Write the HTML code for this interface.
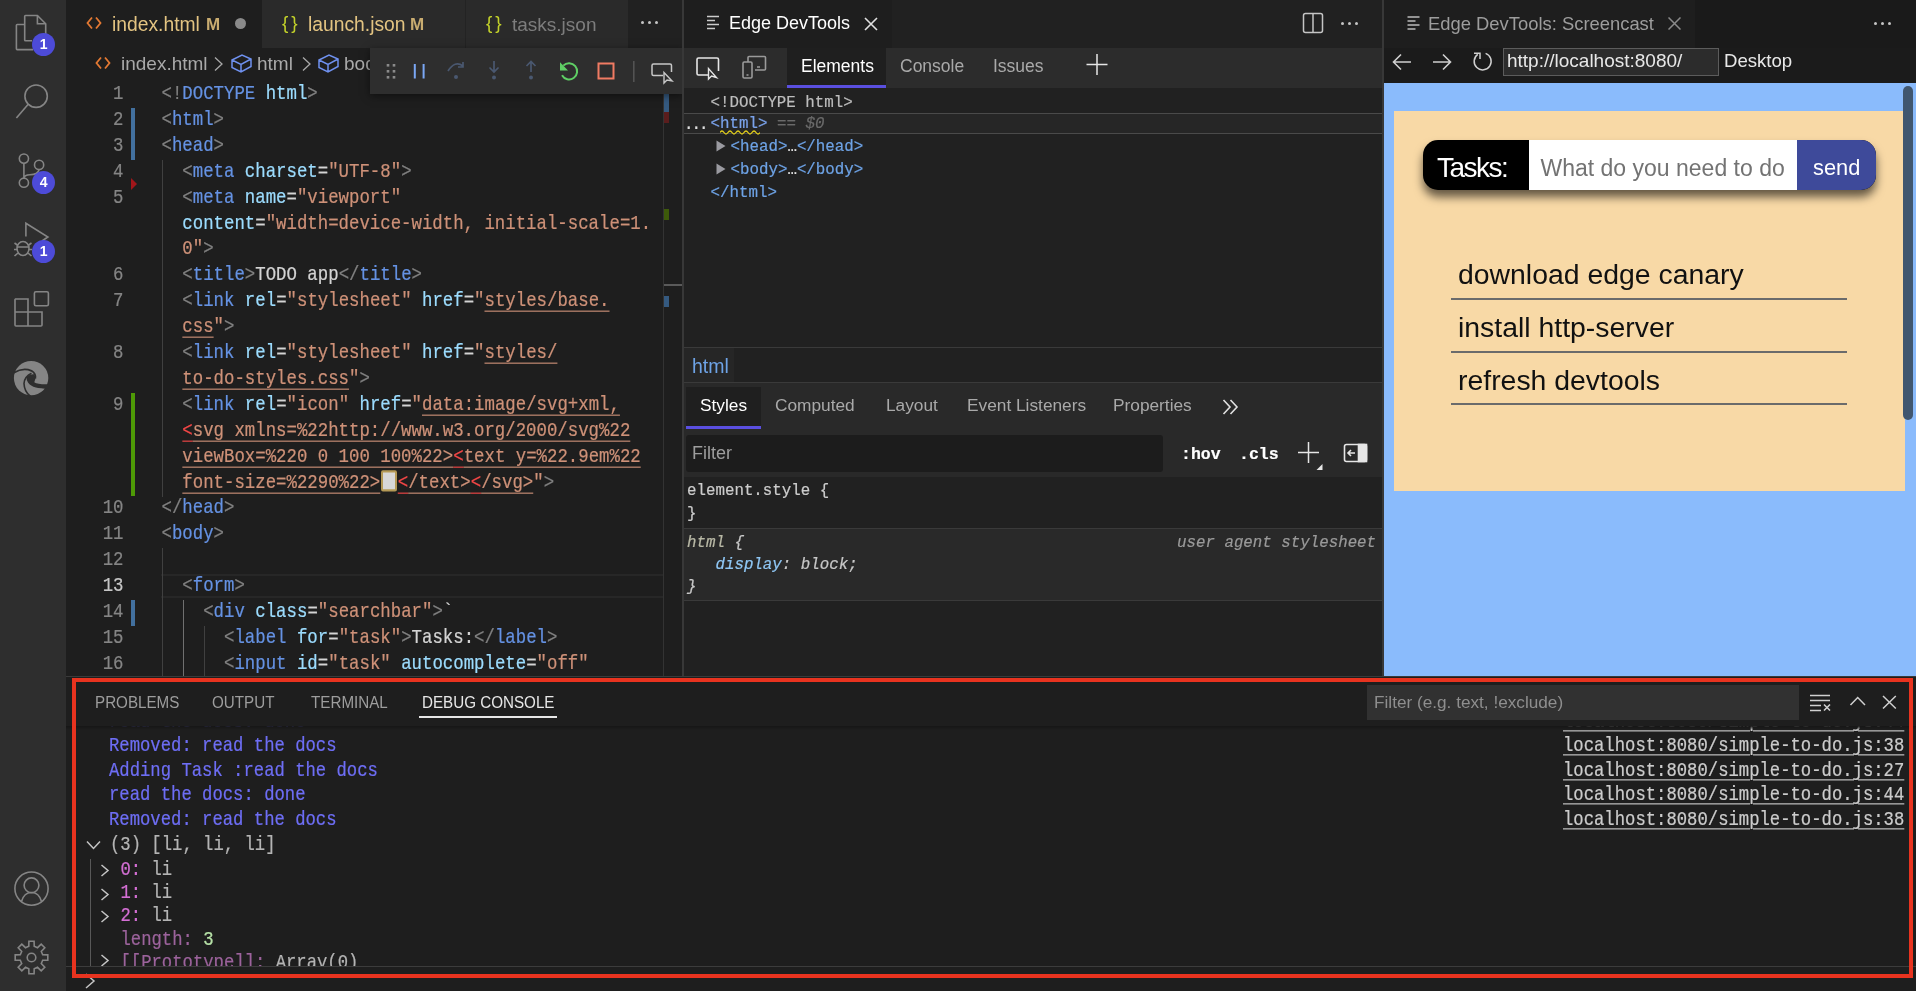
<!DOCTYPE html>
<html><head><meta charset="utf-8">
<style>
*{box-sizing:border-box;margin:0;padding:0}
html,body{width:1916px;height:991px;overflow:hidden;background:#1e1e1e;font-family:"Liberation Sans",sans-serif;position:relative}
.a{position:absolute}
.t{white-space:pre;position:absolute;line-height:1.2}
.badge{position:absolute;width:23px;height:23px;border-radius:50%;background:#4d4bd8;color:#fff;font-size:14px;font-weight:bold;text-align:center;line-height:23px}
.row{position:absolute;left:0;height:25.9px;width:597px;font-family:"Liberation Mono",monospace;font-size:17.36px;line-height:25.9px;white-space:pre;transform:scaleY(1.12);transform-origin:0 16px}
.ln{position:absolute;left:0;width:57.5px;text-align:right;color:#858585}
.cd{position:absolute;left:95.5px;color:#d4d4d4}
.p{color:#808080}.tg{color:#6592e3}.at{color:#9cdcfe}.st{color:#ce9178}.tx{color:#d4d4d4}.er{color:#f44747}
.stu{color:#ce9178;text-decoration:underline;text-decoration-color:#ce9178;text-underline-offset:4px;text-decoration-thickness:1px}
.eru{color:#f44747;text-decoration:underline;text-decoration-color:#f44747;text-underline-offset:4px;text-decoration-thickness:1px}
.emo{display:inline-block;width:16px;height:19px;vertical-align:-3px;background:#d8d8d8;border:2px solid #b59a56;border-radius:2px;margin:0 1px 0 0.5px;position:relative}
.mono{font-family:"Liberation Mono",monospace}
.cl{font-size:17.24px;line-height:24px;transform:scaleY(1.13);transform-origin:0 16.6px}
.lk{color:#cccccc;text-decoration:underline;text-underline-offset:3px;text-decoration-thickness:1px}
.row,.mono{-webkit-text-stroke:0.2px currentColor}
</style></head><body>

<div id="root" style="position:absolute;left:0;top:0;width:1916px;height:991px;will-change:transform;overflow:hidden;background:#1e1e1e">
<div class="a act-bg" style="left:0;top:0;width:66px;height:991px;background:#2e2e2e"></div>
<svg class="a" style="left:0;top:0" width="66" height="991" viewBox="0 0 66 991" fill="none" stroke="#858585" stroke-width="1.6">
 <!-- files -->
 <path d="M24.5,24.5 H17.2 Q16.4,24.5 16.4,25.3 V48.8 Q16.4,49.6 17.2,49.6 H33"/>
 <path d="M25.5,15.5 H37.4 L45.7,23.8 V36 M25.5,15.5 Q24.7,15.5 24.7,16.3 V39.9 Q24.7,40.7 25.5,40.7 H32"/>
 <path d="M37.4,15.5 V23.8 H45.7"/>
 <!-- search -->
 <circle cx="36.1" cy="96.2" r="11.2"/>
 <path d="M28.2,104.3 L16.4,118.1"/>
 <!-- scm -->
 <circle cx="23.9" cy="158.6" r="4.6"/>
 <circle cx="39.1" cy="164.9" r="4.6"/>
 <circle cx="23.9" cy="182.7" r="4.6"/>
 <path d="M23.9,163.2 V178.1 M39.1,169.5 Q38,174.8 30,174.8 Q24.5,174.8 23.9,178"/>
 <!-- run debug -->
 <path d="M25.9,236.5 V223.3 L47.9,237 L42,241"/>
 <ellipse cx="23" cy="248.5" rx="6" ry="7"/>
 <path d="M14.5,243 L18,245.5 M14.5,256 L18,253 M31.5,243 L28,245.5 M31.5,256 L28,253 M14,249.5 H17 M29,249.5 H32 M17,247 H29"/>
 <!-- extensions -->
 <path d="M15.5,299 H28 V312 H42 V325 Q42,326 41,326 H16 Q15,326 15,325 V299.5 Z M15,312 H28 V326"/>
 <rect x="34.4" y="291.8" width="14" height="14" rx="1.5"/>
 <!-- account -->
 <circle cx="31.5" cy="888.6" r="16.6"/>
 <circle cx="31.5" cy="885.3" r="7.4"/>
 <path d="M21.5,901.5 Q24,892.5 31.5,892.5 Q39,892.5 41.5,901.5"/>
 <!-- gear -->
 <path d="M28.9,941.2 L34.1,941.2 L34.2,946.3 L37.5,947.7 L41.2,944.2 L44.8,947.8 L41.3,951.5 L42.7,954.8 L47.8,954.9 L47.8,960.1 L42.7,960.2 L41.3,963.5 L44.8,967.2 L41.2,970.8 L37.5,967.3 L34.2,968.7 L34.1,973.8 L28.9,973.8 L28.8,968.7 L25.5,967.3 L21.8,970.8 L18.2,967.2 L21.7,963.5 L20.3,960.2 L15.2,960.1 L15.2,954.9 L20.3,954.8 L21.7,951.5 L18.2,947.8 L21.8,944.2 L25.5,947.7 L28.8,946.3Z"/>
 <circle cx="31.5" cy="957.5" r="4.3"/>
 <!-- edge logo -->
 <g stroke="none">
  <circle cx="31.1" cy="378.1" r="17.2" fill="#858585"/>
  <path d="M26.6,376.8 Q30,373.8 34,374.3 Q36.2,376.5 35.2,379.5 Q34.2,381.6 34.5,382.5 Q38,384.6 49,384.2 L49,389 Q40,388.5 35.9,387.6 Q30.5,386 28,382.5 Q26.2,379.5 26.6,376.8 Z" fill="#2e2e2e"/>
 </g>
 <path d="M13.8,372.8 Q23,367.2 31.5,370.8 Q36.2,373.5 35.3,378.5" stroke="#2e2e2e" stroke-width="1.8" fill="none"/>
 <path d="M31.5,373.2 Q24.5,376.5 24,383.5 Q24.2,391.5 30.5,396.5" stroke="#2e2e2e" stroke-width="1.6" fill="none"/>
</svg>
<div class="badge" style="left:32.1px;top:32.9px">1</div>
<div class="badge" style="left:32.1px;top:170.8px">4</div>
<div class="badge" style="left:32.1px;top:240px">1</div>

<!-- editor tab bar -->
<div class="a" style="left:66px;top:0;width:616px;height:48px;background:#212121"></div>
<div class="a" style="left:66px;top:0;width:196px;height:48px;background:#1e1e1e"></div>
<div class="a" style="left:262px;top:0;width:203px;height:48px;background:#2a2a2a"></div>
<div class="a" style="left:465px;top:0;width:163px;height:48px;background:#2a2a2a;border-left:1px solid #232323"></div>
<!-- tab contents -->
<svg class="a" style="left:86px;top:16px" width="16" height="14" viewBox="0 0 16 14" fill="none" stroke="#e37933" stroke-width="1.8"><path d="M6,1.5 L1.5,7 L6,12.5 M10,1.5 L14.5,7 L10,12.5"/></svg>
<div class="t" style="left:112px;top:13px;font-size:19.3px;color:#e3c482">index.html</div>
<div class="t" style="left:206px;top:14.5px;font-size:17px;color:#c9ac70;font-weight:bold">M</div>
<div class="a" style="left:235px;top:17.6px;width:11.2px;height:11.2px;border-radius:50%;background:#8a8a8a"></div>
<div class="t" style="left:282px;top:12px;font-size:19px;color:#c2d12a;letter-spacing:3px">{}</div>
<div class="t" style="left:308px;top:13px;font-size:19.3px;color:#e3c482">launch.json</div>
<div class="t" style="left:410px;top:14.5px;font-size:17px;color:#c9ac70;font-weight:bold">M</div>
<div class="t" style="left:486px;top:12px;font-size:19px;color:#c2d12a;letter-spacing:3px">{}</div>
<div class="t" style="left:512px;top:13.5px;font-size:19px;color:#7d7d7d">tasks.json</div>
<div class="a" style="left:641px;top:21px;width:3.4px;height:3.4px;border-radius:50%;background:#c5c5c5"></div>
<div class="a" style="left:648px;top:21px;width:3.4px;height:3.4px;border-radius:50%;background:#c5c5c5"></div>
<div class="a" style="left:655px;top:21px;width:3.4px;height:3.4px;border-radius:50%;background:#c5c5c5"></div>

<!-- breadcrumbs -->
<svg class="a" style="left:95px;top:56px" width="16" height="14" viewBox="0 0 16 14" fill="none" stroke="#e37933" stroke-width="1.8"><path d="M6,1.5 L1.5,7 L6,12.5 M10,1.5 L14.5,7 L10,12.5"/></svg>
<div class="t" style="left:121px;top:53px;font-size:19px;color:#a9a9a9">index.html</div>
<svg class="a" style="left:213px;top:56px" width="11" height="16" viewBox="0 0 11 16" fill="none" stroke="#a9a9a9" stroke-width="1.3"><path d="M2,1.5 L9,8 L2,14.5"/></svg>
<svg class="a" style="left:231px;top:54px" width="21" height="19" viewBox="0 0 21 19" fill="none" stroke="#6f91ef" stroke-width="1.5"><path d="M1,6 L11,1 L20,5 L20,12.5 L10,18 L1,13.5 Z M1,6 L10,10.5 L20,5 M10,10.5 L10,18"/></svg>
<div class="t" style="left:257px;top:53px;font-size:19px;color:#a9a9a9">html</div>
<svg class="a" style="left:301px;top:56px" width="11" height="16" viewBox="0 0 11 16" fill="none" stroke="#a9a9a9" stroke-width="1.3"><path d="M2,1.5 L9,8 L2,14.5"/></svg>
<svg class="a" style="left:318px;top:54px" width="21" height="19" viewBox="0 0 21 19" fill="none" stroke="#6f91ef" stroke-width="1.5"><path d="M1,6 L11,1 L20,5 L20,12.5 L10,18 L1,13.5 Z M1,6 L10,10.5 L20,5 M10,10.5 L10,18"/></svg>
<div class="t" style="left:344px;top:53px;font-size:19px;color:#a9a9a9">body</div>

<!-- code -->
<div class="a" style="left:66px;top:82px;width:597px;height:594px;overflow:hidden">
 <!-- current line -->
 <div class="a" style="left:95px;top:492px;width:502px;height:23.5px;border-top:2px solid #272727;border-bottom:2px solid #272727"></div>
 <!-- indent guides -->
 <div class="a" style="left:95.5px;top:77.7px;width:1px;height:337px;background:#404040"></div>
 <div class="a" style="left:95.5px;top:466px;width:1px;height:128px;background:#404040"></div>
 <div class="a" style="left:116.5px;top:518px;width:1px;height:76px;background:#707070"></div>
 <div class="a" style="left:137.5px;top:544px;width:1px;height:50px;background:#404040"></div>
 <!-- git gutter -->
 <div class="a" style="left:65px;top:25.9px;width:4px;height:51.8px;background:#42709e"></div>
 <div class="a" style="left:65px;top:310.8px;width:4px;height:103.6px;background:#4e9a06"></div>
 <div class="a" style="left:65px;top:518px;width:4px;height:25.9px;background:#42709e"></div>
 <svg class="a" style="left:65px;top:96px" width="6" height="12" viewBox="0 0 6 12"><path d="M0,0 L6,6 L0,12 Z" fill="#a1161a"/></svg>
 <div class="row" style="top:0.0px"><span class="ln">1</span><span class="cd"><span class="p">&lt;!</span><span class="tg">DOCTYPE</span><span class="tx"> </span><span class="at">html</span><span class="p">&gt;</span></span></div>
<div class="row" style="top:25.9px"><span class="ln">2</span><span class="cd"><span class="p">&lt;</span><span class="tg">html</span><span class="p">&gt;</span></span></div>
<div class="row" style="top:51.8px"><span class="ln">3</span><span class="cd"><span class="p">&lt;</span><span class="tg">head</span><span class="p">&gt;</span></span></div>
<div class="row" style="top:77.7px"><span class="ln">4</span><span class="cd"><span class="tx">  </span><span class="p">&lt;</span><span class="tg">meta</span><span class="tx"> </span><span class="at">charset</span><span class="tx">=</span><span class="st">&quot;UTF-8&quot;</span><span class="p">&gt;</span></span></div>
<div class="row" style="top:103.6px"><span class="ln">5</span><span class="cd"><span class="tx">  </span><span class="p">&lt;</span><span class="tg">meta</span><span class="tx"> </span><span class="at">name</span><span class="tx">=</span><span class="st">&quot;viewport&quot;</span></span></div>
<div class="row" style="top:129.5px"><span class="cd"><span class="tx">  </span><span class="at">content</span><span class="tx">=</span><span class="st">&quot;width=device-width, initial-scale=1.</span></span></div>
<div class="row" style="top:155.4px"><span class="cd"><span class="tx">  </span><span class="st">0&quot;</span><span class="p">&gt;</span></span></div>
<div class="row" style="top:181.3px"><span class="ln">6</span><span class="cd"><span class="tx">  </span><span class="p">&lt;</span><span class="tg">title</span><span class="p">&gt;</span><span class="tx">TODO app</span><span class="p">&lt;/</span><span class="tg">title</span><span class="p">&gt;</span></span></div>
<div class="row" style="top:207.2px"><span class="ln">7</span><span class="cd"><span class="tx">  </span><span class="p">&lt;</span><span class="tg">link</span><span class="tx"> </span><span class="at">rel</span><span class="tx">=</span><span class="st">&quot;stylesheet&quot;</span><span class="tx"> </span><span class="at">href</span><span class="tx">=</span><span class="st">&quot;</span><span class="stu">styles/base.</span></span></div>
<div class="row" style="top:233.1px"><span class="cd"><span class="tx">  </span><span class="stu">css</span><span class="st">&quot;</span><span class="p">&gt;</span></span></div>
<div class="row" style="top:259.0px"><span class="ln">8</span><span class="cd"><span class="tx">  </span><span class="p">&lt;</span><span class="tg">link</span><span class="tx"> </span><span class="at">rel</span><span class="tx">=</span><span class="st">&quot;stylesheet&quot;</span><span class="tx"> </span><span class="at">href</span><span class="tx">=</span><span class="st">&quot;</span><span class="stu">styles/</span></span></div>
<div class="row" style="top:284.9px"><span class="cd"><span class="tx">  </span><span class="stu">to-do-styles.css</span><span class="st">&quot;</span><span class="p">&gt;</span></span></div>
<div class="row" style="top:310.8px"><span class="ln">9</span><span class="cd"><span class="tx">  </span><span class="p">&lt;</span><span class="tg">link</span><span class="tx"> </span><span class="at">rel</span><span class="tx">=</span><span class="st">&quot;icon&quot;</span><span class="tx"> </span><span class="at">href</span><span class="tx">=</span><span class="st">&quot;</span><span class="stu">data:image/svg+xml,</span></span></div>
<div class="row" style="top:336.7px"><span class="cd"><span class="tx">  </span><span class="eru">&lt;</span><span class="stu">svg xmlns=%22http://www.w3.org/2000/svg%22</span></span></div>
<div class="row" style="top:362.6px"><span class="cd"><span class="tx">  </span><span class="stu">viewBox=%220 0 100 100%22&gt;</span><span class="eru">&lt;</span><span class="stu">text y=%22.9em%22</span></span></div>
<div class="row" style="top:388.5px"><span class="cd"><span class="tx">  </span><span class="stu">font-size=%2290%22&gt;</span><span class="emo"></span><span class="eru">&lt;</span><span class="stu">/text&gt;</span><span class="eru">&lt;</span><span class="stu">/svg&gt;</span><span class="st">&quot;</span><span class="p">&gt;</span></span></div>
<div class="row" style="top:414.4px"><span class="ln">10</span><span class="cd"><span class="p">&lt;/</span><span class="tg">head</span><span class="p">&gt;</span></span></div>
<div class="row" style="top:440.3px"><span class="ln">11</span><span class="cd"><span class="p">&lt;</span><span class="tg">body</span><span class="p">&gt;</span></span></div>
<div class="row" style="top:466.2px"><span class="ln">12</span><span class="cd"></span></div>
<div class="row cur" style="top:492.1px"><span class="ln" style="color:#c6c6c6">13</span><span class="cd"><span class="tx">  </span><span class="p">&lt;</span><span class="tg">form</span><span class="p">&gt;</span></span></div>
<div class="row" style="top:518.0px"><span class="ln">14</span><span class="cd"><span class="tx">    </span><span class="p">&lt;</span><span class="tg">div</span><span class="tx"> </span><span class="at">class</span><span class="tx">=</span><span class="st">&quot;searchbar&quot;</span><span class="p">&gt;</span><span class="tx">`</span></span></div>
<div class="row" style="top:543.9px"><span class="ln">15</span><span class="cd"><span class="tx">      </span><span class="p">&lt;</span><span class="tg">label</span><span class="tx"> </span><span class="at">for</span><span class="tx">=</span><span class="st">&quot;task&quot;</span><span class="p">&gt;</span><span class="tx">Tasks:</span><span class="p">&lt;/</span><span class="tg">label</span><span class="p">&gt;</span></span></div>
<div class="row" style="top:569.8px"><span class="ln">16</span><span class="cd"><span class="tx">      </span><span class="p">&lt;</span><span class="tg">input</span><span class="tx"> </span><span class="at">id</span><span class="tx">=</span><span class="st">&quot;task&quot;</span><span class="tx"> </span><span class="at">autocomplete</span><span class="tx">=</span><span class="st">&quot;off&quot;</span></span></div>
</div>
<!-- editor overview ruler -->
<div class="a" style="left:663px;top:82px;width:1px;height:594px;background:#333"></div>
<div class="a" style="left:664px;top:94px;width:5px;height:18px;background:#355a80"></div>
<div class="a" style="left:664px;top:112px;width:5px;height:11px;background:#5a1d1d"></div>
<div class="a" style="left:664px;top:209px;width:5px;height:11px;background:#3d5a0a"></div>
<div class="a" style="left:664px;top:296px;width:5px;height:11px;background:#355a80"></div>
<div class="a" style="left:664px;top:284px;width:19px;height:2px;background:#5a5a5a"></div>

<!-- debug toolbar -->
<div class="a" style="left:370px;top:48px;width:313px;height:46px;background:#2e2e2e;box-shadow:0 2px 8px rgba(0,0,0,0.5)"></div>
<svg class="a" style="left:370px;top:48px" width="313" height="46" viewBox="370 48 313 46" fill="none" stroke-width="1.7">
 <g fill="#8a8a8a" stroke="none"><rect x="386.7" y="64" width="2.6" height="2.6"/><rect x="392.7" y="64" width="2.6" height="2.6"/><rect x="386.7" y="70" width="2.6" height="2.6"/><rect x="392.7" y="70" width="2.6" height="2.6"/><rect x="386.7" y="76" width="2.6" height="2.6"/><rect x="392.7" y="76" width="2.6" height="2.6"/></g>
 <path d="M414.8,64 V78.5 M423.6,64 V78.5" stroke="#7aa7f4" stroke-width="2"/>
 <g stroke="#4a5870"><path d="M448,71 Q455,60 463,66 M463,62 V67 H458"/><circle cx="456" cy="77" r="2" fill="#4a5870" stroke="none"/></g>
 <g stroke="#4a5870"><path d="M494,61 V72 M489.5,67.5 L494,72 L498.5,67.5"/><circle cx="494" cy="77.5" r="2" fill="#4a5870" stroke="none"/></g>
 <g stroke="#4a5870"><path d="M531,61.5 V72 M526.5,66 L531,61.5 L535.5,66"/><circle cx="531" cy="77.5" r="2" fill="#4a5870" stroke="none"/></g>
 <path d="M562,75.3 A8.1,8.1 0 1 0 563.3,65.6" stroke="#5fcf65" stroke-width="2"/><path d="M560,62.3 L560,70.6 L568,70.6 Z" fill="#5fcf65" stroke="none"/>
 <rect x="598.5" y="63.5" width="15" height="15" stroke="#f07b63" stroke-width="2"/>
 <path d="M633.8,61 V82" stroke="#555" stroke-width="1.5"/>
 <path d="M663,75.5 H653.5 Q652,75.5 652,74 V65.5 Q652,64 653.5,64 H670 Q671.5,64 671.5,65.5 V72" stroke="#c8c8c8" stroke-width="1.5"/>
 <path d="M664,72.5 L664,83 L667,80 L672,81 Z" stroke="#c8c8c8" stroke-width="1.4"/>
</svg>

<!-- dividers -->
<div class="a" style="left:682px;top:0;width:2px;height:676px;background:#383838"></div>
<div class="a" style="left:1382px;top:0;width:2px;height:676px;background:#383838"></div>
<!-- tab bar -->
<div class="a" style="left:684px;top:0;width:698px;height:48px;background:#212121"></div>
<div class="a" style="left:684px;top:0;width:208px;height:48px;background:#1e1e1e"></div>
<svg class="a" style="left:706px;top:15px" width="15" height="15" viewBox="0 0 15 15" stroke="#cccccc" stroke-width="1.5"><path d="M1,1.5 H13 M1,5.5 H9 M1,9.5 H13 M1,13.5 H9"/></svg>
<div class="t" style="left:729px;top:13.2px;font-size:18px;color:#ffffff">Edge DevTools</div>
<svg class="a" style="left:864px;top:17px" width="14" height="14" viewBox="0 0 14 14" stroke="#e0e0e0" stroke-width="1.6"><path d="M1,1 L13,13 M13,1 L1,13"/></svg>
<svg class="a" style="left:1302px;top:12px" width="22" height="22" viewBox="0 0 22 22" fill="none" stroke="#c5c5c5" stroke-width="1.5"><rect x="1.5" y="1.5" width="19" height="19" rx="2"/><path d="M11,1.5 V20.5"/></svg>
<div class="a" style="left:1341px;top:21.5px;width:3.4px;height:3.4px;border-radius:50%;background:#c5c5c5"></div>
<div class="a" style="left:1348px;top:21.5px;width:3.4px;height:3.4px;border-radius:50%;background:#c5c5c5"></div>
<div class="a" style="left:1355px;top:21.5px;width:3.4px;height:3.4px;border-radius:50%;background:#c5c5c5"></div>

<!-- devtools toolbar -->
<div class="a" style="left:684px;top:48px;width:698px;height:40px;background:#2c2c2c"></div>
<div class="a" style="left:787px;top:48px;width:99px;height:40px;background:#1f1f1f;border-bottom:3px solid #5a4fe0"></div>
<svg class="a" style="left:690px;top:50px" width="90" height="36" viewBox="690 50 90 36" fill="none" stroke="#e6e6e6" stroke-width="1.6">
 <path d="M708,75 H698.5 Q697,75 697,73.5 V59.5 Q697,58 698.5,58 H717 Q718.5,58 718.5,59.5 V71"/>
 <path d="M708.5,68.5 V79 L711.5,76 L716.5,77.5 Z" stroke-width="1.4"/>
 <g stroke="#9a9a9a"><path d="M748,62 V57.5 Q748,56.5 749,56.5 H764.5 Q765.5,56.5 765.5,57.5 V69 Q765.5,70 764.5,70 H755"/><rect x="743" y="62" width="9" height="16" rx="1.2"/><path d="M746.5,75 H748.5 M757,67 H760"/></g>
</svg>
<div class="t" style="left:801px;top:56px;font-size:17.5px;color:#ffffff">Elements</div>
<div class="t" style="left:900px;top:56px;font-size:17.5px;color:#a9a9a9">Console</div>
<div class="t" style="left:993px;top:56px;font-size:17.5px;color:#a9a9a9">Issues</div>
<svg class="a" style="left:1086px;top:54px" width="22" height="22" viewBox="0 0 22 22" stroke="#e6e6e6" stroke-width="1.5"><path d="M11,0 V21 M0.5,10.5 H21.5"/></svg>

<!-- elements tree -->
<div class="a" style="left:684px;top:88px;width:698px;height:260px;background:#212121"></div>
<div class="a" style="left:684px;top:113px;width:698px;height:21px;background:#262626;border-top:1px solid #4a4a4a;border-bottom:1px solid #4a4a4a"></div>
<div class="t mono" style="left:710.5px;top:94px;font-size:15.8px;line-height:19px;color:#bdbdbd">&lt;!DOCTYPE html&gt;</div>
<div class="t mono" style="left:684px;top:116px;font-size:15.8px;line-height:19px;color:#e0e0e0;letter-spacing:-2px">...</div>
<div class="t mono" style="left:710.5px;top:115px;font-size:15.8px;line-height:19px;color:#7aa2ea">&lt;html&gt;</div>
<div class="t mono" style="left:777px;top:115px;font-size:15.8px;line-height:19px;color:#6a6a6a;font-style:italic">== $0</div>
<svg class="a" style="left:720px;top:129px" width="40" height="7" viewBox="0 0 40 7" fill="none" stroke="#e6d21a" stroke-width="1.3"><path d="M0,3.5 Q2,0.5 4,3.5 T8,3.5 T12,3.5 T16,3.5 T20,3.5 T24,3.5 T28,3.5 T32,3.5 T36,3.5 T40,3.5"/></svg>
<svg class="a" style="left:716px;top:140px" width="10" height="12" viewBox="0 0 10 12"><path d="M0.5,0.5 L9.5,6 L0.5,11.5 Z" fill="#9a9aa0"/></svg>
<svg class="a" style="left:716px;top:163px" width="10" height="12" viewBox="0 0 10 12"><path d="M0.5,0.5 L9.5,6 L0.5,11.5 Z" fill="#9a9aa0"/></svg>
<div class="t mono" style="left:730.5px;top:137.5px;font-size:15.8px;line-height:19px;color:#6ea3e6">&lt;head&gt;<span style="color:#e6e6e6">…</span>&lt;/head&gt;</div>
<div class="t mono" style="left:730.5px;top:160.5px;font-size:15.8px;line-height:19px;color:#6ea3e6">&lt;body&gt;<span style="color:#e6e6e6">…</span>&lt;/body&gt;</div>
<div class="t mono" style="left:710.5px;top:183.5px;font-size:15.8px;line-height:19px;color:#6ea3e6">&lt;/html&gt;</div>

<!-- breadcrumb -->
<div class="a" style="left:684px;top:347px;width:698px;height:1px;background:#3a3a3a"></div>
<div class="a" style="left:684px;top:348px;width:698px;height:35px;background:#212121"></div>
<div class="a" style="left:684px;top:348px;width:50px;height:34px;background:#262626"></div>
<div class="t" style="left:692px;top:354.5px;font-size:19.5px;color:#6ea3e6">html</div>
<div class="a" style="left:684px;top:382px;width:698px;height:1px;background:#3a3a3a"></div>

<!-- styles tabs -->
<div class="a" style="left:684px;top:383px;width:698px;height:47px;background:#292929"></div>
<div class="a" style="left:686px;top:387px;width:75px;height:42px;background:#1f1f1f;border-bottom:3px solid #5a4fe0"></div>
<div class="t" style="left:700px;top:395px;font-size:17.3px;color:#ffffff">Styles</div>
<div class="t" style="left:775px;top:395px;font-size:17.3px;color:#a9a9a9">Computed</div>
<div class="t" style="left:886px;top:395px;font-size:17.3px;color:#a9a9a9">Layout</div>
<div class="t" style="left:967px;top:395px;font-size:17.3px;color:#a9a9a9">Event Listeners</div>
<div class="t" style="left:1113px;top:395px;font-size:17.3px;color:#a9a9a9">Properties</div>
<svg class="a" style="left:1222px;top:399px" width="17" height="16" viewBox="0 0 17 16" fill="none" stroke="#e0e0e0" stroke-width="1.6"><path d="M1.5,1 L8,8 L1.5,15 M8.5,1 L15,8 L8.5,15"/></svg>

<!-- filter row -->
<div class="a" style="left:684px;top:430px;width:698px;height:47px;background:#292929"></div>
<div class="a" style="left:686px;top:435px;width:477px;height:37px;background:#1c1c1c;border-radius:3px"></div>
<div class="t" style="left:692px;top:443px;font-size:18px;color:#9d9d9d">Filter</div>
<div class="t mono" style="left:1181px;top:445px;font-size:16.5px;font-weight:bold;color:#ffffff">:hov</div>
<div class="t mono" style="left:1239px;top:445px;font-size:16.5px;font-weight:bold;color:#ffffff">.cls</div>
<svg class="a" style="left:1297px;top:441px" width="30" height="30" viewBox="0 0 30 30" stroke="#e6e6e6" stroke-width="1.5"><path d="M11.5,1 V22 M1,11.5 H22"/><path d="M19.5,29 L25.5,23 V29 Z" fill="#e6e6e6" stroke="none"/></svg>
<svg class="a" style="left:1343px;top:443px" width="26" height="20" viewBox="0 0 26 20" fill="none" stroke="#e6e6e6" stroke-width="1.6"><rect x="1.5" y="1.5" width="22" height="17" rx="2"/><rect x="15.5" y="1.5" width="8" height="17" fill="#e6e6e6"/><path d="M12,10 H5 M8,7 L5,10 L8,13"/></svg>

<!-- rules -->
<div class="a" style="left:684px;top:477px;width:698px;height:51px;background:#212121"></div>
<div class="t mono" style="left:687px;top:479.5px;font-size:15.8px;line-height:23px;color:#cccccc">element.style {<br>}</div>
<div class="a" style="left:684px;top:528px;width:698px;height:1px;background:#3a3a3a"></div>
<div class="a" style="left:684px;top:529px;width:698px;height:71px;background:#292929"></div>
<div class="t mono" style="left:687px;top:531.7px;font-size:15.8px;line-height:22px;color:#c8c8c8;font-style:italic"><span style="color:#b9b9a6">html</span> {<br>   <span style="color:#8fc7f5">display</span>: block;<br>}</div>
<div class="t mono" style="left:1177px;top:534px;font-size:15.8px;color:#9a9a9a;font-style:italic">user agent stylesheet</div>
<div class="a" style="left:684px;top:601px;width:698px;height:75px;background:#212121"></div>
<div class="a" style="left:684px;top:600px;width:698px;height:1px;background:#3a3a3a"></div>

<div class="a" style="left:1384px;top:0;width:532px;height:48px;background:#1a1a1a"></div>
<div class="a" style="left:1384px;top:0;width:311px;height:48px;background:#1e1e1e"></div>
<svg class="a" style="left:1407px;top:16px" width="14" height="14" viewBox="0 0 14 14" stroke="#bbbbbb" stroke-width="1.5"><path d="M0.5,1 H12.5 M0.5,5 H8.5 M0.5,9 H12.5 M0.5,13 H8.5"/></svg>
<div class="t" style="left:1428px;top:12.5px;font-size:18.4px;color:#9d9d9d">Edge DevTools: Screencast</div>
<svg class="a" style="left:1668px;top:17px" width="13" height="13" viewBox="0 0 13 13" stroke="#8a8a8a" stroke-width="1.5"><path d="M0.5,0.5 L12.5,12.5 M12.5,0.5 L0.5,12.5"/></svg>
<div class="a" style="left:1874px;top:21.5px;width:3.4px;height:3.4px;border-radius:50%;background:#c5c5c5"></div>
<div class="a" style="left:1881px;top:21.5px;width:3.4px;height:3.4px;border-radius:50%;background:#c5c5c5"></div>
<div class="a" style="left:1888px;top:21.5px;width:3.4px;height:3.4px;border-radius:50%;background:#c5c5c5"></div>

<div class="a" style="left:1384px;top:48px;width:532px;height:35px;background:#1b1b1b"></div>
<svg class="a" style="left:1390px;top:50px" width="110" height="24" viewBox="1390 50 110 24" fill="none" stroke="#d0d0d0" stroke-width="1.6">
 <path d="M1411,62 H1394 M1401,54.5 L1393.5,62 L1401,69.5"/>
 <path d="M1433,62 H1450.5 M1443,54.5 L1450.5,62 L1443,69.5"/>
 <path d="M1485.6,53.4 A8.5,8.5 0 1 1 1477.8,54.4" stroke-width="1.5"/>
 <path d="M1474,53.2 H1480 V59" stroke-width="1.5"/>
</svg>
<div class="a" style="left:1503px;top:48px;width:216px;height:28px;background:#2c2c2c;border:1px solid #5c5c5c"></div>
<div class="t" style="left:1507px;top:49.5px;font-size:19px;color:#e8e8e8">http://localhost:8080/</div>
<div class="t" style="left:1724px;top:49.5px;font-size:18.6px;color:#e8e8e8">Desktop</div>

<div class="a" style="left:1384px;top:83px;width:532px;height:593px;background:#8abbfc"></div>
<div class="a" style="left:1393.5px;top:111px;width:511px;height:380px;background:#f8d9a6"></div>
<!-- search bar -->
<div class="a" style="left:1422.6px;top:140px;width:453px;height:50px;border-radius:15px;background:#000;box-shadow:0 7px 10px rgba(0,0,0,0.6)"></div>
<div class="a" style="left:1528.8px;top:140.4px;width:268px;height:49.3px;background:#fff"></div>
<div class="a" style="left:1796.8px;top:140px;width:79px;height:50px;background:#3e4a9a;border-radius:0 15px 15px 0"></div>
<div class="t" style="left:1437px;top:151px;font-size:28px;color:#fff;letter-spacing:-1.5px">Tasks:</div>
<div class="t" style="left:1540.5px;top:154.5px;font-size:23px;color:#737373">What do you need to do</div>
<div class="t" style="left:1813px;top:155px;font-size:21.8px;color:#fff">send</div>
<!-- list -->
<div class="t" style="left:1458px;top:257px;font-size:28.4px;color:#111">download edge canary</div>
<div class="a" style="left:1451px;top:297.5px;width:396px;height:2px;background:#6b6b6b"></div>
<div class="t" style="left:1458px;top:310px;font-size:28.4px;color:#111">install http-server</div>
<div class="a" style="left:1451px;top:350.5px;width:396px;height:2px;background:#6b6b6b"></div>
<div class="t" style="left:1458px;top:362.5px;font-size:28.4px;color:#111">refresh devtools</div>
<div class="a" style="left:1451px;top:403px;width:396px;height:2px;background:#6b6b6b"></div>
<!-- scrollbar -->
<div class="a" style="left:1903px;top:86px;width:10px;height:334px;border-radius:5px;background:#40566f"></div>

<div class="a" style="left:66px;top:676px;width:1850px;height:315px;background:#1e1e1e"></div>
<div class="a" style="left:66px;top:676px;width:1850px;height:1px;background:#3a3a3a"></div>
<!-- tabs -->
<div class="t" style="left:95px;top:694px;font-size:15.2px;color:#9d9d9d;transform:scaleY(1.12);transform-origin:0 17px">PROBLEMS</div>
<div class="t" style="left:212px;top:694px;font-size:15.2px;color:#9d9d9d;transform:scaleY(1.12);transform-origin:0 17px">OUTPUT</div>
<div class="t" style="left:311px;top:694px;font-size:15.2px;color:#9d9d9d;transform:scaleY(1.12);transform-origin:0 17px">TERMINAL</div>
<div class="t" style="left:422px;top:694px;font-size:15.2px;color:#e7e7e7;transform:scaleY(1.12);transform-origin:0 17px">DEBUG CONSOLE</div>
<div class="a" style="left:419px;top:715.5px;width:138px;height:2px;background:#e7e7e7"></div>
<!-- filter -->
<div class="a" style="left:1367px;top:685px;width:432px;height:35px;background:#313131"></div>
<div class="t" style="left:1374px;top:692px;font-size:17.2px;color:#8e8e8e">Filter (e.g. text, !exclude)</div>
<svg class="a" style="left:1806px;top:690px" width="95" height="24" viewBox="1806 690 95 24" fill="none" stroke="#d0d0d0" stroke-width="1.5">
 <path d="M1810,695.5 H1830 M1810,700.5 H1830 M1810,705.5 H1821 M1810,710.5 H1821"/>
 <path d="M1824,704.5 L1830,710.5 M1830,704.5 L1824,710.5" stroke-width="1.6"/>
 <path d="M1850.5,705 L1857.7,697.5 L1865,705"/>
 <path d="M1883,696 L1895.8,708.5 M1895.8,696 L1883,708.5"/>
</svg>
<!-- console content -->
<div class="a" style="left:66px;top:725.5px;width:1850px;height:240.5px;overflow:hidden">
<div class="t mono cl" style="left:43px;top:-14.1px"><span style="color:#6e6ef5">read the docs: done</span></div>
<div class="t mono cl" style="left:43px;top:9.9px"><span style="color:#6e6ef5">Removed: read the docs</span></div>
<div class="t mono cl" style="left:43px;top:34.8px"><span style="color:#6e6ef5">Adding Task :read the docs</span></div>
<div class="t mono cl" style="left:43px;top:58.8px"><span style="color:#6e6ef5">read the docs: done</span></div>
<div class="t mono cl" style="left:43px;top:83.4px"><span style="color:#6e6ef5">Removed: read the docs</span></div>
<div class="t mono cl" style="left:44px;top:108.3px"><span style="color:#b4b4b4">(3) [li, li, li]</span></div>
<div class="t mono cl" style="left:54.5px;top:133.6px"><span style="color:#d46fd4">0:</span> <span style="color:#b4b4b4">li</span></div>
<div class="t mono cl" style="left:54.5px;top:156.9px"><span style="color:#d46fd4">1:</span> <span style="color:#b4b4b4">li</span></div>
<div class="t mono cl" style="left:54.5px;top:179.7px"><span style="color:#d46fd4">2:</span> <span style="color:#b4b4b4">li</span></div>
<div class="t mono cl" style="left:54.5px;top:203.8px"><span style="color:#9c639c">length:</span> <span style="color:#b5e0a6">3</span></div>
<div class="t mono cl" style="left:54.5px;top:226.9px"><span style="color:#9c639c">[[Prototype]]:</span> <span style="color:#b4b4b4">Array(0)</span></div>
<div class="t mono cl lk" style="left:1497px;top:-14.1px">localhost:8080/simple-to-do.js:44</div>
<div class="t mono cl lk" style="left:1497px;top:9.9px">localhost:8080/simple-to-do.js:38</div>
<div class="t mono cl lk" style="left:1497px;top:34.8px">localhost:8080/simple-to-do.js:27</div>
<div class="t mono cl lk" style="left:1497px;top:58.8px">localhost:8080/simple-to-do.js:44</div>
<div class="t mono cl lk" style="left:1497px;top:83.4px">localhost:8080/simple-to-do.js:38</div>
<svg class="a" style="left:20px;top:114.5px" width="15" height="10" viewBox="0 0 15 10" fill="none" stroke="#c5c5c5" stroke-width="1.5"><path d="M1,1.5 L7.5,8.5 L14,1.5"/></svg>
<div class="a" style="left:23.5px;top:133px;width:1px;height:120px;background:#585858"></div>
<svg class="a" style="left:34px;top:138.7px" width="10" height="13" viewBox="0 0 10 13" fill="none" stroke="#c5c5c5" stroke-width="1.5"><path d="M1.5,1 L8,6.5 L1.5,12"/></svg>
<svg class="a" style="left:34px;top:162.0px" width="10" height="13" viewBox="0 0 10 13" fill="none" stroke="#c5c5c5" stroke-width="1.5"><path d="M1.5,1 L8,6.5 L1.5,12"/></svg>
<svg class="a" style="left:34px;top:184.8px" width="10" height="13" viewBox="0 0 10 13" fill="none" stroke="#c5c5c5" stroke-width="1.5"><path d="M1.5,1 L8,6.5 L1.5,12"/></svg>
<svg class="a" style="left:34px;top:228.5px" width="10" height="13" viewBox="0 0 10 13" fill="none" stroke="#c5c5c5" stroke-width="1.5"><path d="M1.5,1 L8,6.5 L1.5,12"/></svg>
</div>
<div class="a" style="left:66px;top:725.5px;width:1850px;height:4px;background:linear-gradient(#161616,rgba(30,30,30,0))"></div>
<div class="a" style="left:66px;top:966px;width:1850px;height:1px;background:#3c3c3c"></div>
<svg class="a" style="left:84px;top:972px" width="14" height="18" viewBox="0 0 14 18" fill="none" stroke="#c5c5c5" stroke-width="1.5"><path d="M2,2 L10,9 L2,16"/></svg>
<!-- red highlight border -->
<div class="a" style="left:72px;top:678px;width:1841px;height:300px;border:4px solid #e8331f"></div>

</div></body></html>
